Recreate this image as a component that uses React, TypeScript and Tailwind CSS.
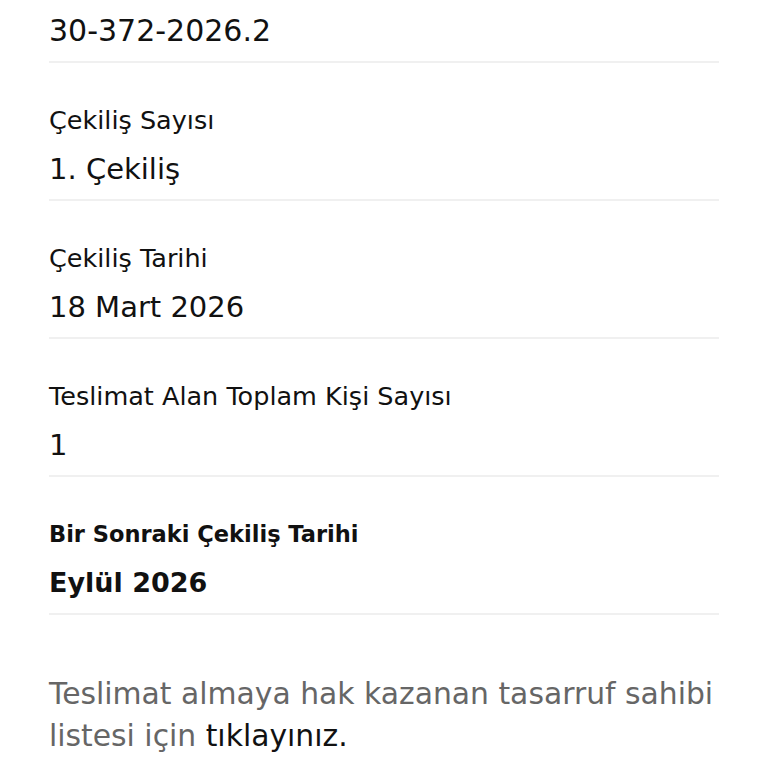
import React from 'react';

const rows = [
  { label: 'Çekiliş Sayısı', value: '1. Çekiliş' },
  { label: 'Çekiliş Tarihi', value: '18 Mart 2026' },
  { label: 'Teslimat Alan Toplam Kişi Sayısı', value: '1' },
];

export default function App() {
  return (
    <div className="min-h-screen bg-white px-[49px] text-[#111]" style={{ fontFamily: '"DejaVu Sans", "Noto Sans", sans-serif' }}>
      {/* First row, label scrolled out of view */}
      <div className="border-b-2 border-[#f0f0f0] pt-[9px] pb-[8px]">
        <div className="text-[30px] leading-[44px]">30-372-2026.2</div>
      </div>

      {rows.map((row) => (
        <div key={row.label} className="flex flex-col border-b-2 border-[#f0f0f0] pt-[41px] pb-[8px] gap-[11px]">
          <div className="text-[25.5px] leading-[32px]">{row.label}</div>
          <div className="text-[29px] leading-[44px]">{row.value}</div>
        </div>
      ))}

      {/* Next draw */}
      <div className="flex flex-col border-b-2 border-[#f0f0f0] pt-[41px] pb-[8px] gap-[11px]">
        <div className="text-[22.5px] leading-[32px] font-bold">Bir Sonraki Çekiliş Tarihi</div>
        <div className="text-[27px] leading-[44px] font-bold">Eylül 2026</div>
      </div>

      <p className="mt-[58px] text-[29.8px] leading-[42px] text-[#666]">
        Teslimat almaya hak kazanan tasarruf sahibi listesi için <span className="text-[#111]">tıklayınız.</span>
      </p>
    </div>
  );
}
